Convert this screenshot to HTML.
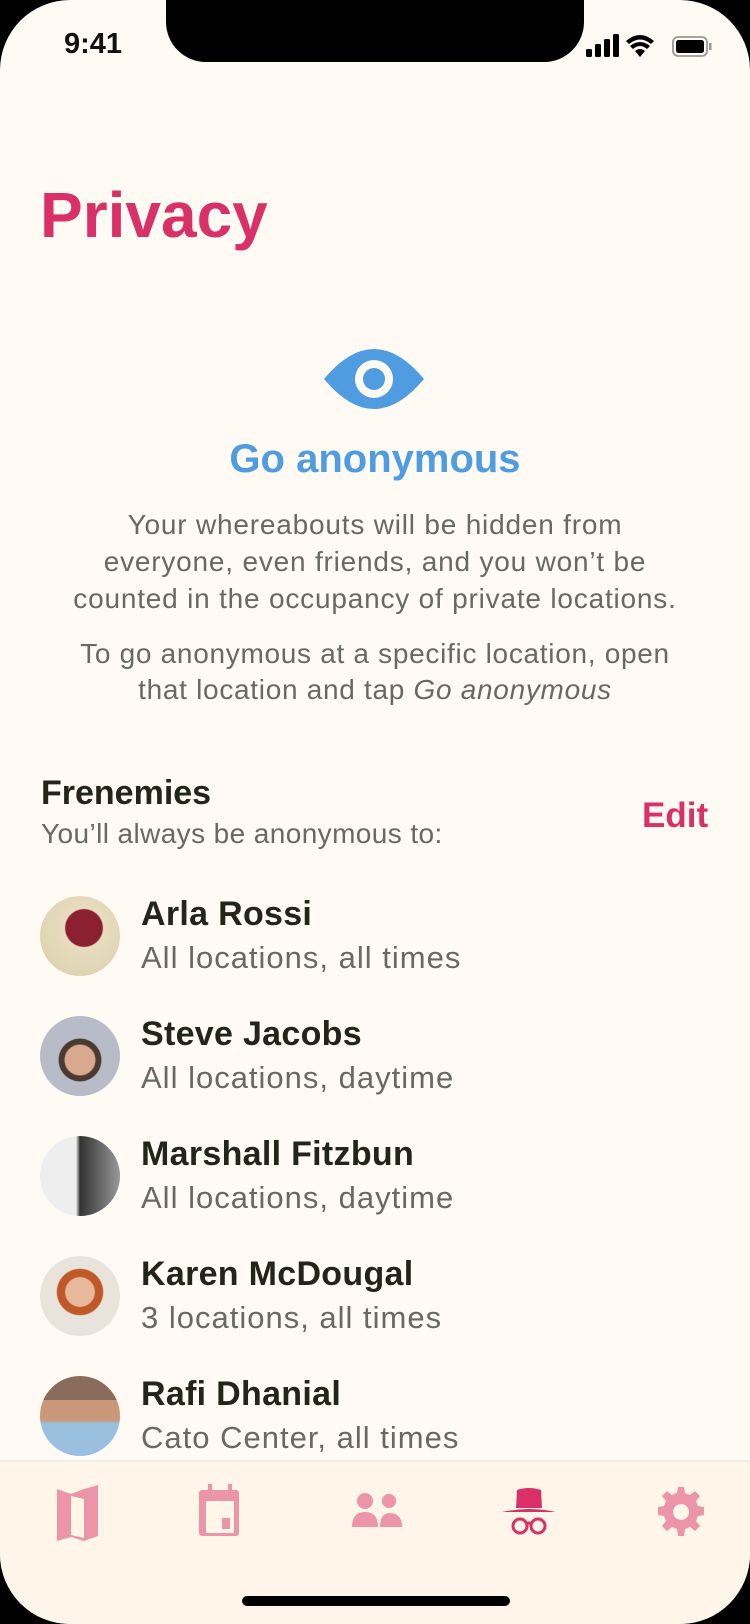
<!DOCTYPE html>
<html><head><meta charset="utf-8"><style>
*{margin:0;padding:0;box-sizing:border-box}
body{width:750px;height:1624px;background:#000;font-family:"Liberation Sans",sans-serif;overflow:hidden;position:relative}
.screen{position:absolute;left:0;top:0;width:750px;height:1624px;background:#fffaf4;border-radius:70px;overflow:hidden}
.notch{position:absolute;left:166px;top:0;width:418px;height:62px;background:#000;border-radius:0 0 40px 40px}
.abs{position:absolute}
.c{text-align:center;width:750px;left:0}
.name{position:absolute;left:141px;font-size:34px;font-weight:bold;color:#222619;letter-spacing:0.3px}
.sub{position:absolute;left:141px;font-size:31px;color:#666a60;letter-spacing:1px}
.av{position:absolute;left:40px;width:80px;height:80px;border-radius:50%}
</style></head><body>
<div class="screen">
<div class="notch"></div>
<div class="abs" style="left:64px;top:28px;font-size:29px;font-weight:bold;color:#111">9:41</div>
<svg class="abs" style="left:586px;top:32px" width="140" height="28" viewBox="0 0 140 28">
<rect x="0" y="17" width="6" height="8" rx="1.5" fill="#000"/><rect x="9" y="12" width="6" height="13" rx="1.5" fill="#000"/><rect x="18" y="7" width="6" height="18" rx="1.5" fill="#000"/><rect x="27" y="2" width="6" height="23" rx="1.5" fill="#000"/>
<path d="M40 9 Q54 -3 68 9 L65 12 Q54 3 43 12Z M44 14 Q54 6 64 14 L61 17 Q54 11 47 17Z M49 19 Q54 15 59 19 L54 25Z" fill="#000"/>
<rect x="87" y="5" width="34" height="19" rx="5" fill="none" stroke="#999" stroke-width="1.8"/><rect x="90" y="8" width="28" height="13" rx="2.5" fill="#000"/><rect x="123" y="11" width="2.5" height="7" fill="#999"/>
</svg>
<div class="abs" style="left:40px;top:178px;font-size:64px;font-weight:bold;color:#d93068">Privacy</div>
<svg class="abs" style="left:322px;top:344px" width="104" height="70" viewBox="0 0 104 70">
<path d="M2 35 Q52 -25 102 35 Q52 95 2 35Z" fill="#4f9de0"/><circle cx="52" cy="35" r="19" fill="#fffaf4"/><circle cx="52" cy="35" r="11" fill="#4f9de0"/>
</svg>
<div class="abs c" style="top:437px;font-size:40px;font-weight:bold;color:#4f9de0">Go anonymous</div>
<div class="abs c" style="top:506px;font-size:28px;line-height:37px;color:#666a60;letter-spacing:0.8px">Your whereabouts will be hidden from<br>everyone, even friends, and you won’t be<br>counted in the occupancy of private locations.</div>
<div class="abs c" style="top:636px;font-size:28px;line-height:36px;color:#666a60;letter-spacing:0.7px">To go anonymous at a specific location, open<br>that location and tap <i>Go anonymous</i></div>
<div class="abs" style="left:41px;top:774px;font-size:34px;font-weight:bold;color:#222619">Frenemies</div>
<div class="abs" style="left:41px;top:818px;font-size:28px;color:#666a60;letter-spacing:0.4px">You’ll always be anonymous to:</div>
<div class="abs" style="left:642px;top:796px;font-size:35px;font-weight:bold;color:#d93068">Edit</div>

<div class="av" style="top:896px;background:radial-gradient(circle at 55% 40%,#8a2030 0 28%,#e8dcc0 30%,#d9cfa8)"></div>
<div class="name" style="top:895px">Arla Rossi</div><div class="sub" style="top:940px">All locations, all times</div>

<div class="av" style="top:1016px;background:radial-gradient(circle at 50% 55%,#d8a890 0 25%,#4a3a30 27% 35%,#b8bcc8 37%)"></div>
<div class="name" style="top:1015px">Steve Jacobs</div><div class="sub" style="top:1060px">All locations, daytime</div>

<div class="av" style="top:1136px;background:linear-gradient(90deg,#eee 0 45%,#333 50%,#999)"></div>
<div class="name" style="top:1135px">Marshall Fitzbun</div><div class="sub" style="top:1180px">All locations, daytime</div>

<div class="av" style="top:1256px;background:radial-gradient(circle at 50% 45%,#e8b89a 0 24%,#c0582a 26% 38%,#e8e4dc 40%)"></div>
<div class="name" style="top:1255px">Karen McDougal</div><div class="sub" style="top:1300px">3 locations, all times</div>

<div class="av" style="top:1376px;background:linear-gradient(180deg,#8a6a5a 0 30%,#c89878 30% 55%,#9ac0e0 60%)"></div>
<div class="name" style="top:1375px">Rafi Dhanial</div><div class="sub" style="top:1420px">Cato Center, all times</div>

<div class="abs" style="left:0;top:1460px;width:750px;height:164px;background:#fff6e9;border-top:2px solid #f3eee6"></div>
<svg class="abs" style="left:0;top:1480px" width="750" height="70" viewBox="0 0 750 70">
<g fill="#ec94a8">
<path d="M57 9 L71 14 L84 9 L98 5 L98 56 L84 61 L71 57 L57 61Z M71 16 L71 55 L84 58 L84 19Z" fill-rule="evenodd"/>
<path d="M208 4h4v6h16v-6h4v6h4a3 3 0 0 1 3 3v40a3 3 0 0 1-3 3h-34a3 3 0 0 1-3-3v-40a3 3 0 0 1 3-3h6z M206 21v32h28v-32z" fill-rule="evenodd"/><rect x="222" y="38" width="8" height="11"/>
<circle cx="365" cy="21" r="8"/><circle cx="389" cy="21" r="7"/><path d="M352 47 Q352 32 365 32 Q378 32 378 47Z M380 47 Q380 34 389 33 Q402 33 402 47Z"/>
<path d="M678 7h6l1 6 5 2 5-4 5 5-4 5 2 5 6 1v8l-6 1-2 5 4 5-5 5-5-4-5 2-1 7h-6l-1-7-5-2-5 4-5-5 4-5-2-5-6-1v-8l6-1 2-5-4-5 5-5 5 4 5-2z M681 24a8 8 0 1 0 0.1 0z" fill-rule="evenodd"/>
</g>
<g fill="#d93068"><path d="M517 10 Q529 6 541 10 L542 28 L516 28Z"/><path d="M502 32 Q529 26 556 32Z"/></g>
<g fill="none" stroke="#d93068" stroke-width="3"><circle cx="520" cy="46" r="7"/><circle cx="538" cy="46" r="7"/><path d="M527 44 Q529 42 531 44"/></g>
</svg>
<div class="abs" style="left:242px;top:1596px;width:268px;height:10px;border-radius:5px;background:#000"></div>
</div>
</body></html>
